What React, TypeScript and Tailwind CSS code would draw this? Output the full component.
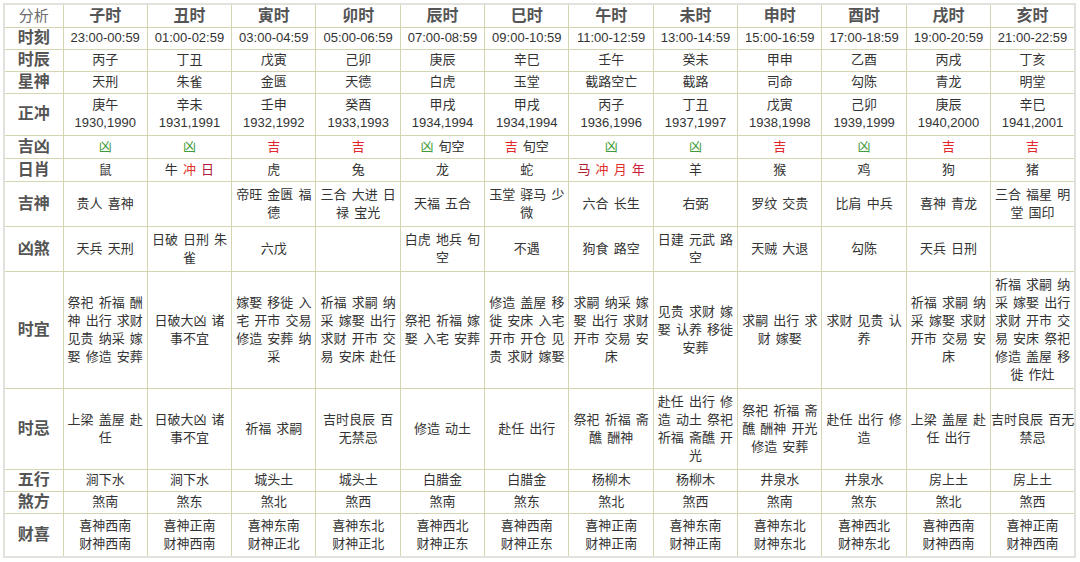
import type { ReactNode } from "react";

const G = ({ children }: { children: ReactNode }) => <span className="text-[#3f9a3a]">{children}</span>;
const R = ({ children }: { children: ReactNode }) => <span className="text-[#e2262b]">{children}</span>;

const HOURS = ["子时", "丑时", "寅时", "卯时", "辰时", "巳时", "午时", "未时", "申时", "酉时", "戌时", "亥时"];

type Row = { label: string; h: string; cells: ReactNode[] };

const ROWS: Row[] = [
  {
    label: "时刻",
    h: "h-[22px]",
    cells: ["23:00-00:59", "01:00-02:59", "03:00-04:59", "05:00-06:59", "07:00-08:59", "09:00-10:59", "11:00-12:59", "13:00-14:59", "15:00-16:59", "17:00-18:59", "19:00-20:59", "21:00-22:59"],
  },
  { label: "时辰", h: "h-[22px]", cells: ["丙子", "丁丑", "戊寅", "己卯", "庚辰", "辛巳", "壬午", "癸未", "甲申", "乙酉", "丙戌", "丁亥"] },
  { label: "星神", h: "h-[22px]", cells: ["天刑", "朱雀", "金匮", "天德", "白虎", "玉堂", "截路空亡", "截路", "司命", "勾陈", "青龙", "明堂"] },
  {
    label: "正冲",
    h: "h-[42px]",
    cells: ["庚午\n1930,1990", "辛未\n1931,1991", "壬申\n1932,1992", "癸酉\n1933,1993", "甲戌\n1934,1994", "甲戌\n1934,1994", "丙子\n1936,1996", "丁丑\n1937,1997", "戊寅\n1938,1998", "己卯\n1939,1999", "庚辰\n1940,2000", "辛巳\n1941,2001"],
  },
  {
    label: "吉凶",
    h: "h-[23px]",
    cells: [
      <G>凶</G>, <G>凶</G>, <R>吉</R>, <R>吉</R>,
      <><G>凶</G> 旬空</>, <><R>吉</R> 旬空</>,
      <G>凶</G>, <G>凶</G>, <R>吉</R>, <G>凶</G>, <R>吉</R>, <R>吉</R>,
    ],
  },
  {
    label: "日肖",
    h: "h-[23px]",
    cells: [
      "鼠",
      <>牛 <span className="text-[#e0302a]">冲</span> <span className="text-[#b0183c]">日</span></>,
      "虎", "兔", "龙", "蛇",
      <><span className="text-[#a8202e]">马</span> <span className="text-[#e0302a]">冲</span> <span className="text-[#e0302a]">月</span> <span className="text-[#c8203a]">年</span></>,
      "羊", "猴", "鸡", "狗", "猪",
    ],
  },
  {
    label: "吉神",
    h: "h-[45px]",
    cells: ["贵人 喜神", "", "帝旺 金匮 福\n德", "三合 大进 日\n禄 宝光", "天福 五合", "玉堂 驿马 少\n微", "六合 长生", "右弼", "罗纹 交贵", "比肩 中兵", "喜神 青龙", "三合 福星 明\n堂 国印"],
  },
  {
    label: "凶煞",
    h: "h-[45px]",
    cells: ["天兵 天刑", "日破 日刑 朱\n雀", "六戊", "", "白虎 地兵 旬\n空", "不遇", "狗食 路空", "日建 元武 路\n空", "天贼 大退", "勾陈", "天兵 日刑", ""],
  },
  {
    label: "时宜",
    h: "h-[117px]",
    cells: [
      "祭祀 祈福 酬\n神 出行 求财\n见贵 纳采 嫁\n娶 修造 安葬",
      "日破大凶 诸\n事不宜",
      "嫁娶 移徙 入\n宅 开市 交易\n修造 安葬 纳\n采",
      "祈福 求嗣 纳\n采 嫁娶 出行\n求财 开市 交\n易 安床 赴任",
      "祭祀 祈福 嫁\n娶 入宅 安葬",
      "修造 盖屋 移\n徙 安床 入宅\n开市 开仓 见\n贵 求财 嫁娶",
      "求嗣 纳采 嫁\n娶 出行 求财\n开市 交易 安\n床",
      "见贵 求财 嫁\n娶 认养 移徙\n安葬",
      "求嗣 出行 求\n财 嫁娶",
      "求财 见贵 认\n养",
      "祈福 求嗣 纳\n采 嫁娶 求财\n开市 交易 安\n床",
      "祈福 求嗣 纳\n采 嫁娶 出行\n求财 开市 交\n易 安床 祭祀\n修造 盖屋 移\n徙 作灶",
    ],
  },
  {
    label: "时忌",
    h: "h-[81px]",
    cells: [
      "上梁 盖屋 赴\n任",
      "日破大凶 诸\n事不宜",
      "祈福 求嗣",
      "吉时良辰 百\n无禁忌",
      "修造 动土",
      "赴任 出行",
      "祭祀 祈福 斋\n醮 酬神",
      "赴任 出行 修\n造 动土 祭祀\n祈福 斋醮 开\n光",
      "祭祀 祈福 斋\n醮 酬神 开光\n修造 安葬",
      "赴任 出行 修\n造",
      "上梁 盖屋 赴\n任 出行",
      "吉时良辰 百无\n禁忌",
    ],
  },
  { label: "五行", h: "h-[22px]", cells: ["涧下水", "涧下水", "城头土", "城头土", "白腊金", "白腊金", "杨柳木", "杨柳木", "井泉水", "井泉水", "房上土", "房上土"] },
  { label: "煞方", h: "h-[22px]", cells: ["煞南", "煞东", "煞北", "煞西", "煞南", "煞东", "煞北", "煞西", "煞南", "煞东", "煞北", "煞西"] },
  {
    label: "财喜",
    h: "h-[44px]",
    cells: ["喜神西南\n财神西南", "喜神正南\n财神西南", "喜神东南\n财神正北", "喜神东北\n财神正北", "喜神西北\n财神正东", "喜神西南\n财神正东", "喜神正南\n财神正南", "喜神东南\n财神正南", "喜神东北\n财神东北", "喜神西北\n财神东北", "喜神西南\n财神西南", "喜神正南\n财神西南"],
  },
];

export default function App() {
  return (
    <div className="w-[1080px] h-[562px] bg-white p-[3px] font-['Liberation_Sans','Noto_Sans_CJK_SC',sans-serif]">
      <table className="w-[1073px] table-fixed border-collapse border-2 border-[#e2e2dc] text-center">
        <colgroup>
          <col className="w-[59px]" />
          {HOURS.map(h => <col key={h} />)}
        </colgroup>
        <thead>
          <tr className="h-[23px]">
            <th className="border border-[#d5d5b2] text-[15px] font-normal text-[#6b6b6b] leading-none">分析</th>
            {HOURS.map(h => (
              <th key={h} className="border border-[#d5d5b2] text-[16px] font-bold text-[#555] leading-none">{h}</th>
            ))}
          </tr>
        </thead>
        <tbody>
          {ROWS.map(r => (
            <tr key={r.label} className={r.h}>
              <td className="border border-[#d5d5b2] text-[16px] font-bold text-[#555] leading-none">{r.label}</td>
              {r.cells.map((c, i) => (
                <td
                  key={i}
                  className="border border-[#d5d5b2] px-0 py-0 text-[13px] leading-[18px] text-[#333] whitespace-pre [word-spacing:1.5px] overflow-visible"
                >
                  {c}
                </td>
              ))}
            </tr>
          ))}
        </tbody>
      </table>
    </div>
  );
}
